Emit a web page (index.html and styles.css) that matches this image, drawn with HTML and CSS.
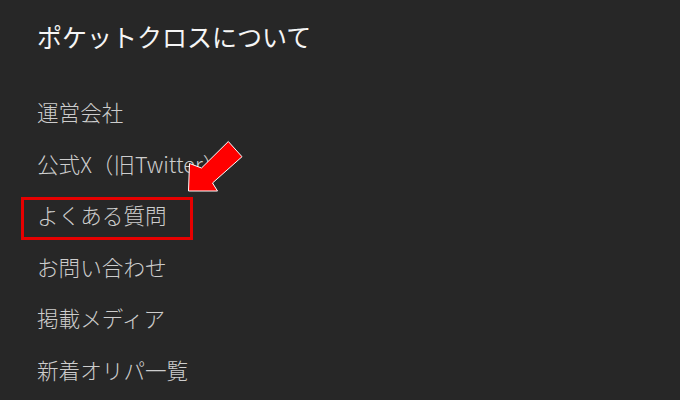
FILE: index.html
```html
<!DOCTYPE html>
<html lang="ja">
<head>
<meta charset="utf-8">
<link rel="stylesheet" href="styles.css">
</head>
<body>
<div class="page">
  <h1 class="title">ポケットクロスについて</h1>
  <ul class="menu">
    <li class="item">運営会社</li>
    <li class="item">公式X（旧Twitter）</li>
    <li class="item highlight">よくある質問</li>
    <li class="item sep">お問い合わせ</li>
    <li class="item">掲載メディア</li>
    <li class="item">新着オリパ一覧</li>
  </ul>
  <svg class="arrow" width="70" height="60" viewBox="180 135 70 60" xmlns="http://www.w3.org/2000/svg">
    <polygon points="188.5,191 189.5,163.5 201.5,168 228.3,141.5 242,156.7 212.5,183 217.5,191" fill="#f00" stroke="#fff" stroke-width="1" stroke-linejoin="miter"/>
  </svg>
</div>
</body>
</html>
```

FILE: styles.css
```css
html, body {
  margin: 0;
  padding: 0;
  background: #272727;
}
.page {
  position: relative;
  width: 680px;
  height: 400px;
  overflow: hidden;
  font-family: "Noto Sans CJK JP", "Noto Sans", sans-serif;
}
.title {
  margin: 0;
  padding-left: 37px;
  height: 72px;
  line-height: 72px;
  font-size: 25px;
  font-weight: 400;
  color: #f5f5f5;
}
.menu {
  list-style: none;
  margin: 14px 0 0 0;
  padding: 0 0 0 37px;
}
.item {
  position: relative;
  height: 51.6px;
  line-height: 51.6px;
  font-size: 21.6px;
  font-weight: 300;
  color: #cdcdcd;
  white-space: nowrap;
}
.highlight::after {
  content: "";
  position: absolute;
  left: -16px;
  top: 8px;
  width: 166px;
  height: 37px;
  border: 3px solid #e60000;
}
.arrow {
  position: absolute;
  left: 180px;
  top: 135px;
}
```
